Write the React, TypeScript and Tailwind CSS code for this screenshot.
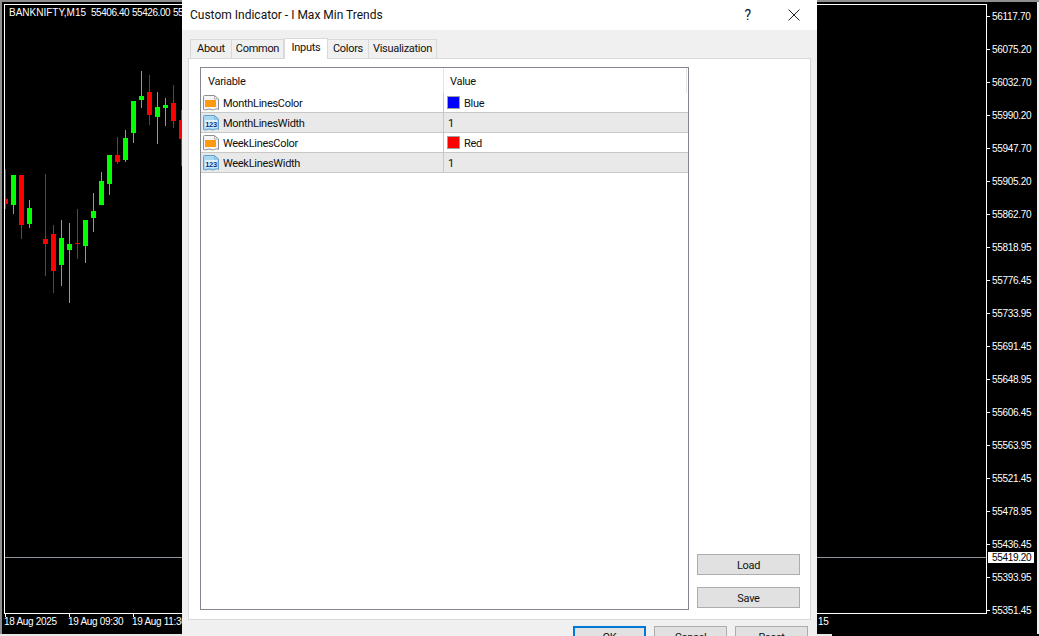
const prices = ['56117.70','56075.20','56032.70','55990.20','55947.70','55905.20','55862.70','55818.95','55776.45','55733.95','55691.45','55648.95','55606.45','55563.95','55521.45','55478.95','55436.45','55393.95','55351.45']

// x, wick top, wick bottom, body top, body bottom
const candles: [number, number, number, number, number, boolean][] = [
  [5, 169, 209, 199, 204, false],
  [13, 175, 214, 175, 205, true],
  [21, 175, 239, 175, 225, false],
  [29, 200, 228, 208, 224, true],
  [45, 174, 276, 239, 244, false],
  [53, 225, 293, 234, 271, false],
  [61, 220, 286, 238, 265, true],
  [69, 223, 303, 244, 250, true],
  [77, 209, 259, 243, 244, false],
  [85, 220, 263, 220, 246, true],
  [93, 193, 232, 211, 218, true],
  [101, 172, 205, 181, 205, true],
  [109, 155, 195, 155, 184, true],
  [117, 137, 164, 155, 162, false],
  [125, 130, 162, 138, 160, true],
  [133, 101, 143, 101, 133, true],
  [141, 71, 108, 96, 100, true],
  [149, 75, 125, 92, 115, false],
  [157, 92, 144, 107, 117, true],
  [165, 98, 126, 105, 108, true],
  [173, 85, 128, 103, 121, false],
  [181, 110, 166, 120, 139, false],
]

function Chart() {
  return (
    <svg className="block" width="981" height="608" viewBox="0 0 981 608">
      {candles.map(([x, wt, wb, bt, bb, up]) => (
        <g key={x} fill={up ? '#00ff00' : '#ff0000'} shapeRendering="crispEdges" transform="translate(-5 -5)">
          <rect x={x} y={wt} width={1} height={wb - wt} />
          <rect x={x - 2} y={bt} width={5} height={bb - bt} />
        </g>
      ))}
      <rect x="0" y="552" width="981" height="1" fill="#8a939b" shapeRendering="crispEdges" />
    </svg>
  )
}

function VarIcon({ kind }: { kind: 'color' | 'num' }) {
  const isColor = kind === 'color'
  return (
    <svg width="17" height="16" viewBox="0 0 17 16" className="shrink-0">
      <path
        d="M0.5 1.5 Q0.5 0.5 1.5 0.5 L11.5 0.5 L15.5 4 L15.5 14.5 Q13.5 13 11.5 14.5 Q9.5 15.5 8 14.5 Q6 13.5 4 14.5 Q2 15.5 0.5 14.5 Z"
        fill={isColor ? '#f6f6f6' : '#a9d8f3'}
        stroke={isColor ? '#8f8f8f' : '#5f9fc9'}
      />
      <path d="M11.5 0.5 L11.5 4 L15.5 4" fill="none" stroke={isColor ? '#b5b5b5' : '#7fb6d8'} />
      {isColor ? (
        <rect x="2" y="5" width="11" height="7" fill="#ff9a10" />
      ) : (
        <>
          <rect x="2" y="5" width="12" height="7.5" fill="#e4f3fc" />
          <text x="8" y="11.5" textAnchor="middle" fontSize="7.5" fontWeight="700" fill="#0e2f7c" fontFamily="Liberation Sans, sans-serif">123</text>
        </>
      )}
    </svg>
  )
}

const rows = [
  { name: 'MonthLinesColor', kind: 'color' as const, swatch: 'bg-[#0000ff]', value: 'Blue' },
  { name: 'MonthLinesWidth', kind: 'num' as const, value: '1' },
  { name: 'WeekLinesColor', kind: 'color' as const, swatch: 'bg-[#ff0000]', value: 'Red' },
  { name: 'WeekLinesWidth', kind: 'num' as const, value: '1' },
]

const tabs = [
  { label: 'About', width: 'w-[42px]' },
  { label: 'Common', width: 'w-[52px]' },
  { label: 'Inputs', width: 'w-[44px]' },
  { label: 'Colors', width: 'w-[41px]' },
  { label: 'Visualization', width: 'w-[68px]' },
]

const dates = [
  { label: '18 Aug 2025', width: 'w-[64px]' },
  { label: '19 Aug 09:30', width: 'w-[64px]' },
  { label: '19 Aug 11:30', width: 'w-[686px]' },
]

export default function App() {
  return (
    <div className="relative h-[636px] w-[1039px] overflow-hidden bg-black font-['Liberation_Sans',sans-serif]">
      <div className="h-[2px] bg-[#8f8f8f]" />
      <div className="flex h-[632px]">
        <div className="w-[4px] border-l-2 border-[#8f8f8f]" />
        <div className="flex w-[1033px] flex-col">
          <div className="flex h-[612px] pt-[2px]">
            <div className="relative h-[610px] w-[983px] border border-white">
              <Chart />
              <div className="absolute top-0 left-[4px] flex text-[10px] leading-[16px] whitespace-nowrap text-white">
                <span className="w-[82px]">BANKNIFTY,M15</span>
                <span className="w-[41px] tracking-[-0.45px]">55406.40</span>
                <span className="w-[41px] tracking-[-0.45px]">55426.00</span>
                <span className="tracking-[-0.45px]">55</span>
              </div>
            </div>
            <div className="relative flex flex-1 flex-col gap-[20px] pt-[6px] text-[10px] leading-[13px] tracking-[-0.3px] text-white">
              {prices.map((p) => (
                <div key={p} className="flex h-[13px] items-center">
                  <span className="h-px w-[3px] bg-white" />
                  <span className="ml-[2px]">{p}</span>
                </div>
              ))}
              <div className="absolute top-[548px] left-[1px] h-[11px] w-[46px] bg-white pl-[4px] leading-[11px] text-black">55419.20</div>
            </div>
          </div>
          <div className="flex h-[18px] text-[10px] leading-[10px] tracking-[-0.3px] whitespace-nowrap text-white">
            {dates.map((d) => (
              <div key={d.label} className={d.width}>
                <div className="ml-px h-[3px] w-px bg-white" />
                <div>{d.label}</div>
              </div>
            ))}
            <div className="pt-[3px]">15</div>
          </div>
        </div>
        <div className="w-[2px] bg-[#f0f0f0]" />
      </div>
      <div className="h-[2px] w-[832px] bg-[#e8e8e8]" />

      <div className="absolute top-0 left-[182px] flex h-[636px] w-[635px] flex-col overflow-hidden bg-[#f0f0f0] font-['Roboto',sans-serif] text-[11px] tracking-[-0.3px] text-[#111]">
        <div className="flex h-[30px] shrink-0 items-center bg-white pl-[8px] text-[12px] tracking-normal">
          <span className="flex-1">Custom Indicator - I Max Min Trends</span>
          <span className="mr-[37px] text-[14px]">?</span>
          <svg width="12" height="12" viewBox="0 0 12 12" className="mr-[17px]"><path d="M0.5 0.5 L11.5 11.5 M11.5 0.5 L0.5 11.5" stroke="#222" fill="none" /></svg>
        </div>
        <div className="flex h-[28px] shrink-0 items-end pl-[8px]">
          {tabs.map((t) =>
            t.label === 'Inputs' ? (
              <div key={t.label} className={`relative z-10 -mb-px flex h-[21px] justify-center border border-b-0 border-[#d9d9d9] bg-white pt-[1px] ${t.width}`}>{t.label}</div>
            ) : (
              <div key={t.label} className={`flex h-[19px] items-center justify-center border border-b-0 border-l-0 border-[#d9d9d9] first:border-l ${t.width}`}>{t.label}</div>
            ),
          )}
        </div>
        <div className="mx-[6px] flex h-[562px] shrink-0 border border-[#d9d9d9] bg-white pt-[8px] pl-[11px]">
          <div className="flex h-[543px] w-[489px] flex-col border border-[#828790]">
            <div className="flex h-[25px] shrink-0 pr-px">
              <div className="w-[243px] border-r border-[#e5e5e5] pt-[6px] pl-[7px]">Variable</div>
              <div className="flex-1 border-r border-[#e5e5e5] pt-[6px] pl-[6px]">Value</div>
            </div>
            {rows.map((r, i) => (
              <div key={r.name} className={`flex h-[20px] shrink-0 border-b border-[#c8c8c8] ${i % 2 ? 'bg-[#e9e9e9]' : 'bg-white'}`}>
                <div className="flex w-[243px] items-center gap-[3px] border-r border-[#c8c8c8] pl-[2px]">
                  <VarIcon kind={r.kind} />
                  <span className="pt-[3px]">{r.name}</span>
                </div>
                <div className="flex items-center gap-[3px] pl-[3px]">
                  {r.swatch && <span className={`h-[13px] w-[13px] border border-[#a0a0a0] ${r.swatch}`} />}
                  <span className="pt-[3px] pl-px">{r.value}</span>
                </div>
              </div>
            ))}
          </div>
          <div className="ml-[8px] flex h-[543px] w-[103px] flex-col justify-end gap-[12px] pb-[2px]">
            <button className="h-[21px] border border-[#adadad] bg-[#e1e1e1] pt-[3px]">Load</button>
            <button className="h-[21px] border border-[#adadad] bg-[#e1e1e1] pt-[3px]">Save</button>
          </div>
        </div>
        <div className="flex shrink-0 justify-end gap-[8px] pt-[6px] pr-[9px]">
          <button className="h-[24px] w-[73px] border-2 border-[#0078d7] bg-[#e1e1e1]">OK</button>
          <button className="h-[24px] w-[73px] border border-[#adadad] bg-[#e1e1e1]">Cancel</button>
          <button className="h-[24px] w-[73px] border border-[#adadad] bg-[#e1e1e1]">Reset</button>
        </div>
      </div>
    </div>
  )
}
